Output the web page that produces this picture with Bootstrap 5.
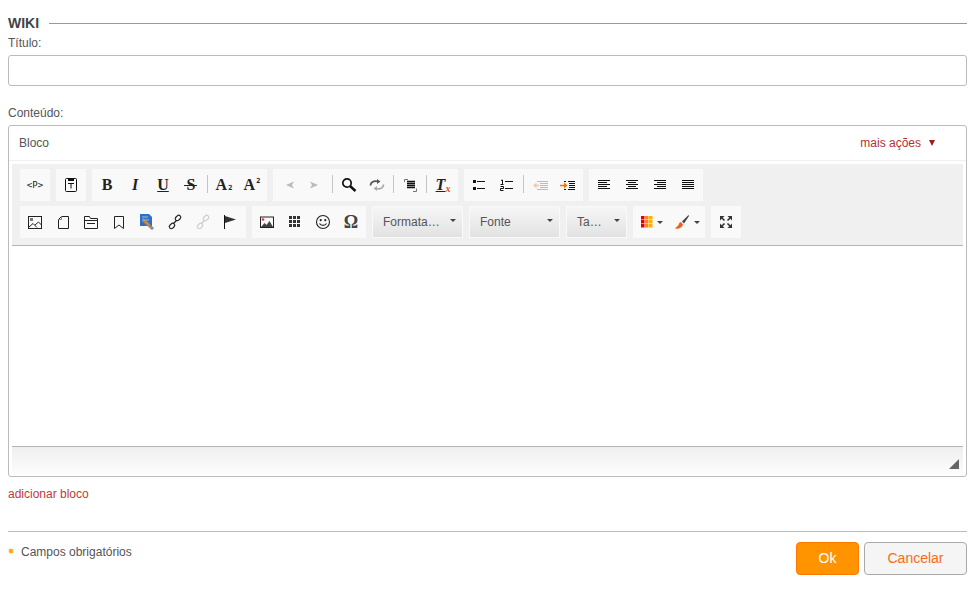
<!DOCTYPE html>
<html lang="pt"><head><meta charset="utf-8"><title>Wiki</title>
<link href="https://cdn.jsdelivr.net/npm/bootstrap@5.3.0/dist/css/bootstrap.min.css" rel="stylesheet">
<style>
html,body{height:608px;overflow:hidden}
body{font-family:"Liberation Sans",Arial,sans-serif;font-size:12px;color:#555;background:#fff;padding:0 8px;line-height:14px}
.wiki-head{height:14px;margin-top:16px;gap:10px;font-weight:700;font-size:14px;color:#444}
.wiki-head i{flex:1;border-top:1px solid #999;display:block}
.fld-label{display:block;margin:6px 0 0;height:14px;font-size:12px;color:#555}
.title-input.form-control{height:31px;min-height:31px;margin-top:5px;border:1px solid #bbb;border-radius:3px;padding:0 8px;box-shadow:none}
.second-label{margin-top:20px}
.ed-card.card{margin-top:5px;height:352px;border:1px solid #bbb;border-radius:3px;box-shadow:none;--bs-card-bg:#fff;flex-direction:column}
.ed-head{height:35px;padding:0 31px 0 10px;border-bottom:1px solid #f0f0f0;color:#555}
.more-link{color:#b5302f;text-decoration:none}
.more-arrow{width:0;height:0;border-left:3px solid transparent;border-right:3px solid transparent;border-top:6px solid #a21a1a;margin-left:8px;display:inline-block;position:relative;top:-1px}
.ed-wrap{margin:3px 3px 0;flex:1;flex-direction:column}
.ed-tools{background:#f0f0f0;padding:5px 8px 7px;border-bottom:1px solid #b5b5b5;height:82px}
.tb-row{height:32px;gap:6px}
.tb-row+.tb-row{margin-top:5px}
.tb-group{background:#f9f9f9;padding:1px;height:32px;display:flex;align-items:stretch}
.tb-btn{width:28px;height:30px;display:flex;align-items:center;justify-content:center;color:#111;position:relative;white-space:nowrap}
.tb-btn svg{display:block}
.tb-split{width:35px;gap:4px}
.tb-sep{width:5px;display:flex;justify-content:center;align-items:flex-start;padding-top:5px}
.tb-sep i{display:block;width:1px;height:18px;background:#c4c4c4}
.gl-serif{font-family:"Liberation Serif",serif;font-weight:700;font-size:16px;line-height:16px;color:#222}
.gl-sup,.gl-sub{font-family:"DejaVu Sans Mono",monospace;font-size:7px;font-weight:700;line-height:7px;color:#222}
.gl-sub{align-self:flex-end;margin:0 0 8px 1px}
.gl-sup{align-self:flex-start;margin:8px 0 0 1px}
.gl-tag{font-family:"DejaVu Sans Mono",monospace;font-size:9px;color:#222}
.gl-x{color:#e5482d;font-family:"Liberation Serif",serif;font-style:italic;font-weight:700;font-size:10px;line-height:10px;align-self:flex-end;margin-bottom:6px}
.gl-u{text-decoration:underline}
.gl-strike::after{content:"";position:absolute;left:7px;width:13px;top:15px;height:1px;background:#222}
.gl-omega{font-size:18px;color:#444}
.tb-combo{background:linear-gradient(#f6f6f6,#e2e2e2);width:100%;display:flex;align-items:center;justify-content:space-between;color:#555;font-size:12px;padding:0 6px 0 10px;height:30px}
.w-91{width:91px}.w-61{width:61px}
.caret-dn{width:0;height:0;border-left:3px solid transparent;border-right:3px solid transparent;border-top:3px solid #444;display:block;margin-top:-4px}
.tb-split .caret-dn{margin-top:1px}
.ed-body{flex:1;background:#fff}
.ed-status{height:30px;border-top:1px solid #b5b5b5;background:linear-gradient(#efefef,#fdfdfd);justify-content:flex-end;align-items:flex-end;padding:0 4px 7px 0}
.add-link{display:block;color:#c0393b;text-decoration:none;margin-top:10px;height:14px}
.rule{height:1px;background:#bbb;margin-top:30px}
.foot-row{margin-top:10px;align-items:flex-start;justify-content:space-between}
.req-note{margin-top:3px;height:14px;color:#555}
.req-star{width:6px;height:6px;margin-right:7px;display:inline-block;position:relative;top:-2px}
.btn-ok.btn,.btn-cancel.btn{height:33px;font-size:14px;padding:0;border-radius:4px;line-height:31px}
.btn-ok.btn{width:63px;background:#ff9400;border:1px solid #ff7a00;color:#fff}
.btn-cancel.btn{width:103px;background:#f5f5f5;border:1px solid #aaa;color:#ff6a13;margin-left:5px}
</style></head>
<body>
<div class="wiki-head d-flex align-items-center"><span>WIKI</span><i></i></div>
<label class="fld-label" for="ti">Título:</label>
<input id="ti" class="form-control title-input" type="text">
<label class="fld-label second-label">Conteúdo:</label>
<div class="card ed-card">
 <div class="ed-head d-flex align-items-center justify-content-between"><span>Bloco</span><a class="more-link" href="#">mais ações<span class="more-arrow"></span></a></div>
 <div class="ed-wrap d-flex">
  <div class="ed-tools">
   <div class="tb-row d-flex">
    <div class="tb-group"><div class="tb-btn"><span class="gl-tag">&lt;P&gt;</span></div></div>
    <div class="tb-group"><div class="tb-btn"><svg width="16" height="16" viewBox="0 0 16 16" fill="none" stroke="#111"><rect x="2.500" y="1.500" width="11" height="13" rx="1"/><rect x="5" y="1" width="6" height="3" fill="#111" stroke="none"/><path d="M5 6.500h6M8 6.500v5"/></svg></div></div>
    <div class="tb-group">
     <div class="tb-btn"><span class="gl-serif">B</span></div>
     <div class="tb-btn"><span class="gl-serif fst-italic">I</span></div>
     <div class="tb-btn"><span class="gl-serif gl-u">U</span></div>
     <div class="tb-btn gl-strike"><span class="gl-serif">S</span></div>
     <div class="tb-sep"><i></i></div>
     <div class="tb-btn"><span class="gl-serif">A</span><span class="gl-sub">2</span></div>
     <div class="tb-btn"><span class="gl-serif">A</span><span class="gl-sup">2</span></div>
    </div>
    <div class="tb-group">
     <div class="tb-btn"><svg width="16" height="16" viewBox="0 0 16 16" fill="#bbb"><path d="M6 8l8-3.500-2 3.500 2 3.500z"/></svg></div>
     <div class="tb-btn"><svg width="16" height="16" viewBox="0 0 16 16" fill="#bbb"><path d="M10 8L2 4.500 4 8l-2 3.500z"/></svg></div>
     <div class="tb-sep"><i></i></div>
     <div class="tb-btn"><svg width="16" height="16" viewBox="0 0 16 16" fill="none" stroke="#111"><circle cx="6" cy="6" r="4.200" stroke-width="1.700"/><path d="M9 9l5.500 5" stroke-width="2.400"/></svg></div>
     <div class="tb-btn"><svg width="16" height="16" viewBox="0 0 16 16" fill="none" stroke-width="1.800"><path d="M1.500 8.500C1.500 5 5 3.500 9 4.500" stroke="#555"/><path d="M14.500 7.500c0 3.500-3.500 5-7.500 4" stroke="#aaa"/><path d="M8 2v5l3.500-2.500z" fill="#555" stroke="none"/><path d="M8 14V9l-3.500 2.500z" fill="#aaa" stroke="none"/></svg></div>
     <div class="tb-sep"><i></i></div>
     <div class="tb-btn"><svg width="16" height="16" viewBox="0 0 16 16" fill="none" stroke="#777"><path d="M2.500 5V2.500H6M14.500 11.500v3H11"/><path d="M5 4.500h8M5 6.500h8M5 8.500h8M5 10.500h8" stroke="#111" stroke-width="1.300"/></svg></div>
     <div class="tb-sep"><i></i></div>
     <div class="tb-btn"><span class="gl-serif fst-italic gl-u">T</span><span class="gl-x">x</span></div>
    </div>
    <div class="tb-group">
     <div class="tb-btn"><svg width="16" height="16" viewBox="0 0 16 16" stroke="#111"><rect x="2" y="3" width="3" height="3" fill="#111" stroke="none"/><rect x="2" y="10" width="3" height="3" fill="#111" stroke="none"/><path d="M6 4.500h8M6 11.500h8"/></svg></div>
     <div class="tb-btn"><svg width="16" height="16" viewBox="0 0 16 16" fill="none" stroke="#111"><path d="M2 3.500l1.500-.500V7M1.500 7.500h3M1.500 9.500h3v2h-3v2h3"/><path d="M6 4.500h8M6 11.500h8"/></svg></div>
     <div class="tb-sep"><i></i></div>
     <div class="tb-btn"><svg width="16" height="16" viewBox="0 0 16 16" fill="none" stroke="#bbb"><path d="M5 4.500h11M8 6.500h8M8 8.500h8M8 10.500h8M5 12.500h11" /><path d="M7 8.500H3" stroke="#f6c8a8" stroke-width="1.500"/><path d="M4.500 5.500L1 8.500l3.500 3z" fill="#f6c8a8" stroke="none"/></svg></div>
     <div class="tb-btn"><svg width="16" height="16" viewBox="0 0 16 16" fill="none" stroke="#111"><path d="M4 4.500h2m2 0h7M9 6.500h6M9 8.500h6M9 10.500h6M4 12.500h2m2 0h7"/><path d="M0 8.500h4" stroke="#f57300" stroke-width="1.500"/><path d="M4 5.500l3.500 3-3.500 3z" fill="#f57300" stroke="none"/></svg></div>
    </div>
    <div class="tb-group">
     <div class="tb-btn"><svg width="16" height="16" viewBox="0 0 16 16" stroke="#111"><path d="M2 3.500h12M2 5.500h9M2 7.500h12M2 9.500h9M2 11.500h12"/></svg></div>
     <div class="tb-btn"><svg width="16" height="16" viewBox="0 0 16 16" stroke="#111"><path d="M2 3.500h12M4 5.500h8M2 7.500h12M4 9.500h8M2 11.500h12"/></svg></div>
     <div class="tb-btn"><svg width="16" height="16" viewBox="0 0 16 16" stroke="#111"><path d="M2 3.500h12M5 5.500h9M2 7.500h12M5 9.500h9M2 11.500h12"/></svg></div>
     <div class="tb-btn"><svg width="16" height="16" viewBox="0 0 16 16" stroke="#111"><path d="M2 3.500h12M2 5.500h12M2 7.500h12M2 9.500h12M2 11.500h12"/></svg></div>
    </div>
   </div>
   <div class="tb-row d-flex">
    <div class="tb-group">
     <div class="tb-btn"><svg width="16" height="16" viewBox="0 0 16 16" fill="none" stroke="#222"><rect x="1.500" y="2.500" width="13" height="12"/><rect x="3" y="4" width="3" height="3" fill="#222" stroke="none" opacity=".6"/><path d="M2 13l4-3.500 4 4M8 11l3.500-3 3 3"/></svg></div>
     <div class="tb-btn"><svg width="16" height="16" viewBox="0 0 16 16" fill="none" stroke="#222"><path d="M6.500 2.500h7v12h-10V5.500z"/><path d="M6.500 2.500v3h-3" stroke="#888"/></svg></div>
     <div class="tb-btn"><svg width="16" height="16" viewBox="0 0 16 16" fill="none" stroke="#222"><path d="M1.500 14.500v-12h5l1 2h7v10z"/><path d="M1.500 6.500h13" /><path d="M4 9.500h8"/></svg></div>
     <div class="tb-btn"><svg width="16" height="16" viewBox="0 0 16 16" fill="none" stroke="#222"><path d="M3.500 2.500h9v12L8 11l-4.500 3.500z"/></svg></div>
     <div class="tb-btn"><svg width="16" height="16" viewBox="0 0 16 16"><path d="M1 0h9l3 3v9H1z" fill="#2f6fc4"/><path d="M3 3h6M3 6h7" stroke="#9cc0ee"/><path d="M4 6l10 9" stroke="#8a8a8a" stroke-width="3"/><path d="M4 5l6 6" stroke="#e88a1a" stroke-width="2"/></svg></div>
     <div class="tb-btn"><svg width="16" height="16" viewBox="0 0 16 16" fill="none" stroke="#222" stroke-width="1.200"><rect x="8" y="2" width="6" height="4" rx="2" transform="rotate(-45 11 4)"/><rect x="2" y="10" width="6" height="4" rx="2" transform="rotate(-45 5 12)"/><path d="M6.500 9.500l3-3"/></svg></div>
     <div class="tb-btn"><svg width="16" height="16" viewBox="0 0 16 16" fill="none" stroke="#ccc" stroke-width="1.200"><rect x="8" y="2" width="6" height="4" rx="2" transform="rotate(-45 11 4)"/><rect x="2" y="10" width="6" height="4" rx="2" transform="rotate(-45 5 12)"/><path d="M6.500 9.500l3-3"/></svg></div>
     <div class="tb-btn"><svg width="16" height="16" viewBox="0 0 16 16"><path d="M1.500 1v14" stroke="#111"/><path d="M2 2l11 3.500L2 9z" fill="#333"/></svg></div>
    </div>
    <div class="tb-group">
     <div class="tb-btn"><svg width="16" height="16" viewBox="0 0 16 16" fill="none" stroke="#222"><rect x="1.500" y="3" width="13" height="10.500"/><path d="M2 13l3.500-4 2 2 3-4 3.500 6z" fill="#444" stroke="none"/><circle cx="4" cy="5.500" r="1.300" fill="#e33" stroke="none"/></svg></div>
     <div class="tb-btn"><svg width="16" height="16" viewBox="0 0 16 16" fill="#333"><rect x="2" y="2" width="3" height="3"/><rect x="6" y="2" width="3" height="3"/><rect x="10" y="2" width="3" height="3"/><rect x="2" y="6" width="3" height="3"/><rect x="6" y="6" width="3" height="3"/><rect x="10" y="6" width="3" height="3"/><rect x="2" y="10" width="3" height="3"/><rect x="6" y="10" width="3" height="3"/><rect x="10" y="10" width="3" height="3"/></svg></div>
     <div class="tb-btn"><svg width="16" height="16" viewBox="0 0 16 16" fill="none" stroke="#222" stroke-width="1.100"><circle cx="8" cy="8" r="6.500"/><circle cx="5.700" cy="6.200" r="1.100" fill="#222" stroke="none"/><circle cx="10.300" cy="6.200" r="1.100" fill="#222" stroke="none"/><path d="M4.500 9.500c1.500 2.500 5.500 2.500 7 0"/></svg></div>
     <div class="tb-btn"><span class="gl-serif gl-omega">Ω</span></div>
    </div>
    <div class="tb-group w-91"><div class="tb-combo"><span>Formata…</span><i class="caret-dn"></i></div></div>
    <div class="tb-group w-91"><div class="tb-combo"><span>Fonte</span><i class="caret-dn"></i></div></div>
    <div class="tb-group w-61"><div class="tb-combo"><span>Ta…</span><i class="caret-dn"></i></div></div>
    <div class="tb-group">
     <div class="tb-btn tb-split"><svg width="12" height="12" viewBox="0 0 12 12"><rect width="3.500" height="3.500" x="0" y="0" fill="#e00000"/><rect width="3.500" height="3.500" x="4" y="0" fill="#ff8a00"/><rect width="3.500" height="3.500" x="8" y="0" fill="#ffb000"/><rect width="3.500" height="3.500" x="0" y="4" fill="#e00000"/><rect width="3.500" height="3.500" x="4" y="4" fill="#ff8a00"/><rect width="3.500" height="3.500" x="8" y="4" fill="#ffb000"/><rect width="3.500" height="3.500" x="0" y="8" fill="#e00000"/><rect width="3.500" height="3.500" x="4" y="8" fill="#ff8a00"/><rect width="3.500" height="3.500" x="8" y="8" fill="#ffb000"/></svg><i class="caret-dn"></i></div>
     <div class="tb-btn tb-split"><svg width="16" height="16" viewBox="0 0 16 16"><path d="M14.500 1L8 7.500l2 2L15 2z" fill="#444"/><path d="M7 8c-2 .5-2 2-2.500 3L1 14.500c3 1 6.500 0 8-4z" fill="#f0601a"/></svg><i class="caret-dn"></i></div>
    </div>
    <div class="tb-group"><div class="tb-btn"><svg width="16" height="16" viewBox="0 0 16 16"><g fill="#333"><path d="M2 2h4.500L2 6.500zM14 2v4.500L9.500 2zM2 14V9.500L6.500 14zM14 14H9.500L14 9.500z"/></g><path d="M4 4l2.500 2.500M12 4L9.500 6.500M4 12l2.500-2.500M12 12L9.500 9.500" stroke="#333" stroke-width="1.600"/></svg></div></div>
   </div>
  </div>
  <div class="ed-body"></div>
  <div class="ed-status d-flex"><svg width="10" height="10" viewBox="0 0 10 10"><path d="M10 0v10H0z" fill="#666"/></svg></div>
 </div>
</div>
<a class="add-link" href="#">adicionar bloco</a>
<div class="rule"></div>
<div class="foot-row d-flex">
 <div class="req-note"><svg class="req-star" viewBox="0 0 6 6"><path d="M3 .5v5M.5 3h5M1.200 1.200l3.600 3.600M4.800 1.200L1.200 4.800" stroke="#ffa200" stroke-width="1.100"/></svg>Campos obrigatórios</div>
 <div class="d-flex"><button class="btn btn-ok" type="button">Ok</button><button class="btn btn-cancel" type="button">Cancelar</button></div>
</div>
</body></html>
